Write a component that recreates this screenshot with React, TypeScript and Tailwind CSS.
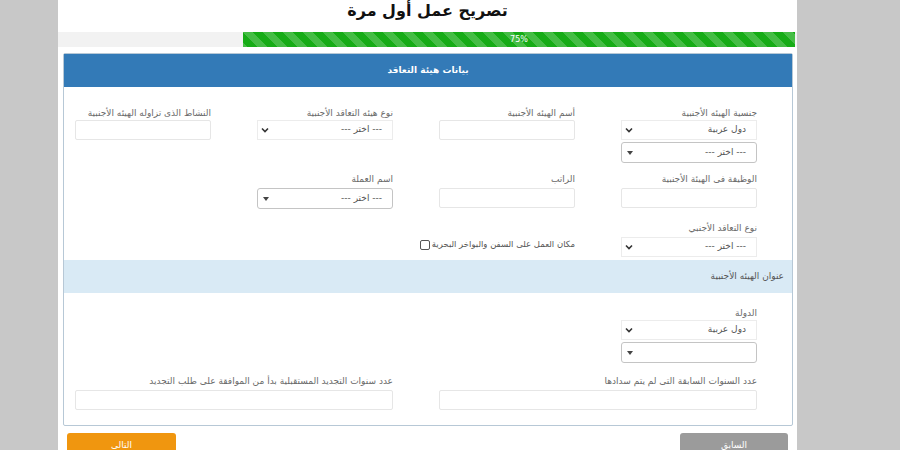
import React from "react";

const font = { fontFamily: '"DejaVu Sans", "Noto Sans", sans-serif' };

function Label({ children, className = "" }: { children: React.ReactNode; className?: string }) {
  return (
    <div className={`h-[14px] leading-[14px] text-[9px] text-[#6a6a6a] whitespace-nowrap ${className}`}>
      {children}
    </div>
  );
}

function TextBox({ className = "" }: { className?: string }) {
  return <div className={`h-[20px] border border-[#e6e6e6] rounded-[2px] bg-white ${className}`} />;
}

// Native-looking select: faint frame, chevron on the left
function PlainSelect({ text, className = "" }: { text: string; className?: string }) {
  return (
    <div className={`h-[20px] flex items-center justify-between border border-[#ececec] bg-white pr-[10px] pl-[3px] ${className}`}>
      <span className="text-[9px] text-[#555]">{text}</span>
      <svg width="8" height="6" viewBox="0 0 8 6">
        <path d="M1 1.5 L4 4.5 L7 1.5" fill="none" stroke="#333" strokeWidth="1.6" />
      </svg>
    </div>
  );
}

// Bordered, rounded select with a small caret
function BoxSelect({ text = "", className = "" }: { text?: string; className?: string }) {
  return (
    <div className={`h-[21px] flex items-center justify-between border border-[#c4c4c4] rounded-[3px] bg-white pr-[10px] pl-[5px] ${className}`}>
      <span className="text-[9px] text-[#555]">{text}</span>
      <svg width="6" height="4" viewBox="0 0 6 4">
        <path d="M0 0 L6 0 L3 4 Z" fill="#444" />
      </svg>
    </div>
  );
}

export default function App() {
  const choose = "--- اختر ---";
  return (
    <div className="w-[900px] h-[450px] flex bg-[#c8c8c8] overflow-hidden" style={font}>
      <div className="w-[58px] shrink-0" />
      <div className="w-[739px] shrink-0 bg-white flex flex-col">
        {/* title */}
        <div className="h-[32px] shrink-0 flex items-start justify-center">
          <div dir="rtl" className="text-[16px] font-bold leading-[20px] text-[#111] pt-[1px]">
            تصريح عمل أول مرة
          </div>
        </div>

        {/* progress */}
        <div className="h-[15px] shrink-0 bg-[#f2f2f2] flex justify-end pr-[2px]">
          <div className="w-[552px] h-full bg-[#16ac16] bg-[linear-gradient(45deg,rgba(255,255,255,.2)_25%,transparent_25%,transparent_50%,rgba(255,255,255,.2)_50%,rgba(255,255,255,.2)_75%,transparent_75%,transparent)] bg-[length:20px_20px] flex items-center justify-center">
            <span className="text-[8px] text-white leading-none">75%</span>
          </div>
        </div>

        {/* panel */}
        <div className="shrink-0 mt-[6px] ml-[5px] mr-[4px] border border-[#b7c8d6] rounded-[2px] flex flex-col">
          <div className="h-[33px] bg-[#337ab7] flex items-center justify-center">
            <span dir="rtl" className="text-[9px] font-bold text-white">بيانات هيئة التعاقد</span>
          </div>

          <div dir="rtl" className="pr-[35px] pl-[11px] pt-[19px]">
            {/* row 1 */}
            <div className="grid grid-cols-4 gap-x-[46px]">
              <div>
                <Label>جنسية الهيئه الأجنبية</Label>
                <PlainSelect text="دول عربية" />
                <BoxSelect text={choose} className="mt-[2px]" />
              </div>
              <div>
                <Label>أسم الهيئه الأجنبية</Label>
                <TextBox />
              </div>
              <div>
                <Label>نوع هيئه التعاقد الأجنبية</Label>
                <PlainSelect text={choose} />
              </div>
              <div>
                <Label>النشاط الذى تزاوله الهيئه الأجنبية</Label>
                <TextBox />
              </div>
            </div>

            {/* row 2 */}
            <div className="grid grid-cols-4 gap-x-[46px] mt-[9px]">
              <div>
                <Label className="mb-[2px]">الوظيفة فى الهيئة الأجنبية</Label>
                <TextBox />
              </div>
              <div>
                <Label className="mb-[2px]">الراتب</Label>
                <TextBox />
              </div>
              <div>
                <Label className="mb-[2px]">اسم العملة</Label>
                <BoxSelect text={choose} />
              </div>
              <div />
            </div>

            {/* row 3 */}
            <div className="grid grid-cols-4 gap-x-[46px] mt-[12px] pb-[3px]">
              <div>
                <Label className="mb-[2px]">نوع التعاقد الأجنبي</Label>
                <PlainSelect text={choose} />
              </div>
              <div className="flex items-end pb-[6px]">
                <label className="flex items-center gap-[2px] text-[8.5px] text-[#555] whitespace-nowrap">
                  <span>مكان العمل على السفن والبواخر البحرية</span>
                  <span className="w-[10px] h-[10px] border border-[#555] rounded-[2px] bg-white inline-block" />
                </label>
              </div>
              <div />
              <div />
            </div>
          </div>

          {/* address band */}
          <div dir="rtl" className="h-[33px] bg-[#d9eaf5] flex items-center pr-[8px]">
            <span className="text-[9px] text-[#555]">عنوان الهيئه الأجنبية</span>
          </div>

          <div dir="rtl" className="pr-[35px] pl-[11px] pt-[13px] pb-[15px]">
            <div className="grid grid-cols-4 gap-x-[46px]">
              <div>
                <Label>الدولة</Label>
                <PlainSelect text="دول عربية" />
                <BoxSelect className="mt-[2px]" />
              </div>
            </div>
            <div className="grid grid-cols-2 gap-x-[46px] mt-[11px]">
              <div>
                <Label className="mb-[2px]">عدد السنوات السابقة التى لم يتم سدادها</Label>
                <TextBox />
              </div>
              <div>
                <Label className="mb-[2px]">عدد سنوات التجديد المستقبلية بدأ من الموافقة على طلب التجديد</Label>
                <TextBox />
              </div>
            </div>
          </div>
        </div>

        {/* buttons */}
        <div className="shrink-0 mt-[7px] flex justify-between px-[9px]">
          <div className="w-[109px] h-[30px] bg-[#f0960f] rounded-[3px] flex justify-center pt-[6px]">
            <span className="text-[9px] text-white">التالى</span>
          </div>
          <div className="w-[108px] h-[30px] bg-[#9b9b9b] rounded-[3px] flex justify-center pt-[6px]">
            <span className="text-[9px] text-white">السابق</span>
          </div>
        </div>
      </div>
      <div className="flex-1" />
    </div>
  );
}
